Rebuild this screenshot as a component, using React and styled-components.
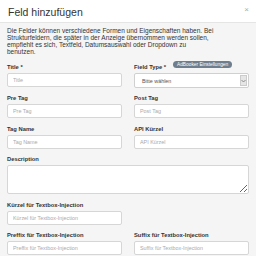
import React from 'react'
import styled, { createGlobalStyle } from 'styled-components'

const GlobalStyle = createGlobalStyle`
    html, body {
        margin: 0;
        padding: 0;
        background: #f5f5f5;
    }
    body {
        font-family: "Liberation Sans", Arial, sans-serif;
        color: #333;
    }
`

const fields = [
    { label: 'Title *', placeholder: 'Title' },
    { label: 'Field Type *', select: true },
    { label: 'Pre Tag', placeholder: 'Pre Tag' },
    { label: 'Post Tag', placeholder: 'Post Tag' },
    { label: 'Tag Name', placeholder: 'Tag Name' },
    { label: 'API Kürzel', placeholder: 'API Kürzel' },
]

const App = () => {
    return (
        <>
            <GlobalStyle />
            <Modal>
                <Header>
                    <Title>Feld hinzufügen</Title>
                    <Close>×</Close>
                </Header>
                <Body>
                    <Intro>
                        Die Felder können verschiedene Formen und Eigenschaften haben. Bei<br />
                        Strukturfeldern, die später in der Anzeige übernommen werden sollen,<br />
                        empfiehlt es sich, Textfeld, Datumsauswahl oder Dropdown zu<br />
                        benutzen.
                    </Intro>
                    <Form>
                        {fields.map((f) => (
                            <Group key={f.label}>
                                <Label>
                                    {f.label}
                                    {f.select && <Badge>AdBooker Einstellungen</Badge>}
                                </Label>
                                {f.select ? (
                                    <Select>
                                        <span>Bitte wählen</span>
                                        <Arrow>
                                            <svg width="5" height="4" viewBox="0 0 5 4">
                                                <path d="M0.5 1 L2.5 3 L4.5 1" fill="none" stroke="#777" strokeWidth="0.8" />
                                            </svg>
                                        </Arrow>
                                    </Select>
                                ) : (
                                    <Input placeholder={f.placeholder} />
                                )}
                            </Group>
                        ))}
                        <Group $wide>
                            <Label>Description</Label>
                            <TextArea />
                        </Group>
                        <Group>
                            <Label>Kürzel für Textbox-Injection</Label>
                            <Input placeholder="Kürzel für Textbox-Injection" />
                        </Group>
                        <Group />
                        <Group>
                            <Label>Preffix für Textbox-Injection</Label>
                            <Input placeholder="Preffix für Textbox-Injection" />
                        </Group>
                        <Group>
                            <Label>Suffix für Textbox-Injection</Label>
                            <Input placeholder="Suffix für Textbox-Injection" />
                        </Group>
                    </Form>
                </Body>
            </Modal>
        </>
    )
}

const Modal = styled.div`
    width: 256px;
    height: 256px;
    overflow: hidden;
    background: #f5f5f5;
`

const Header = styled.div`
    display: flex;
    align-items: flex-start;
    justify-content: space-between;
    padding: 6px 7px 4px 8px;
    background: #fff;
    border-bottom: 1px solid #e5e5e5;
`

const Title = styled.h4`
    margin: 0;
    font-size: 10.5px;
    line-height: 12px;
    font-weight: normal;
    color: #333;
`

const Close = styled.span`
    font-size: 8px;
    line-height: 8px;
    color: #aaa;
`

const Body = styled.div`
    padding: 4px 7px 0;
`

const Intro = styled.p`
    margin: 0 0 8px;
    font-size: 6.5px;
    line-height: 7px;
    color: #333;
    white-space: nowrap;
`

const Form = styled.div`
    display: grid;
    grid-template-columns: 1fr 1fr;
    column-gap: 12px;
`

const Group = styled.div`
    grid-column: ${(p) => (p.$wide ? '1 / -1' : 'auto')};
    margin-bottom: 6.4px;
    position: relative;
`

const Label = styled.label`
    display: block;
    font-size: 5.8px;
    line-height: 8px;
    font-weight: bold;
    margin-bottom: 2px;
    color: #333;
`

const Badge = styled.span`
    position: absolute;
    left: 39px;
    top: -2px;
    padding: 0 4px;
    height: 7px;
    line-height: 7px;
    border-radius: 4px;
    background: #6f7e8e;
    color: #fff;
    font-size: 4.8px;
    font-weight: normal;
    white-space: nowrap;
`

const Input = styled.input`
    box-sizing: border-box;
    display: block;
    width: 100%;
    height: 14px;
    padding: 0 5px;
    border: 1px solid #d6d6d6;
    border-radius: 2px;
    background: #fff;
    font-family: inherit;
    font-size: 5.4px;
    color: #555;
    outline: none;
    &::placeholder {
        color: #aaa;
    }
`

const Select = styled.div`
    box-sizing: border-box;
    display: flex;
    align-items: center;
    justify-content: space-between;
    height: 15px;
    padding: 0 1px 0 7px;
    border: 1px solid #d0d0d0;
    border-radius: 2px;
    background: #fff;
    font-size: 5.4px;
    color: #555;
`

const Arrow = styled.span`
    display: flex;
    align-items: center;
    justify-content: center;
    width: 7px;
    height: 11px;
    background: #e6e6e6;
    border: 1px solid #ccc;
    box-sizing: border-box;
`

const TextArea = styled.textarea`
    box-sizing: border-box;
    display: block;
    width: 100%;
    height: 29px;
    border: 1px solid #d6d6d6;
    border-radius: 2px;
    background: #fff;
    resize: vertical;
    outline: none;
`

export default App
